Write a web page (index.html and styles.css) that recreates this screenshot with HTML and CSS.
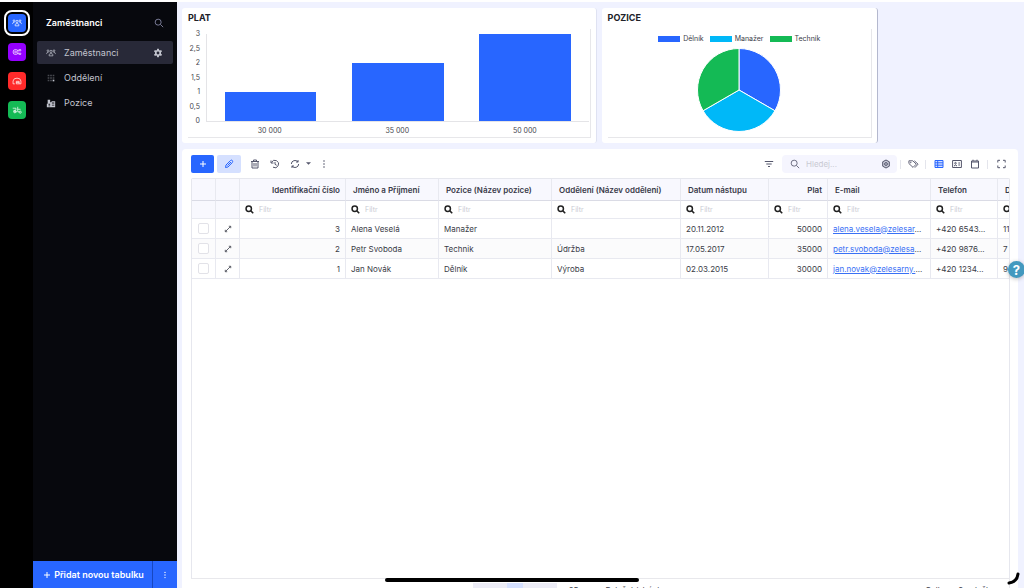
FILE: index.html
```
<!DOCTYPE html>
<html lang="cs">
<head>
<meta charset="utf-8">
<meta name="viewport" content="width=device-width, initial-scale=1">
<title>Zaměstnanci</title>
<link rel="stylesheet" href="styles.css">
</head>
<body>
<svg class="defs" aria-hidden="true">
  <symbol id="search" viewBox="0 0 12 12"><circle cx="5" cy="5" r="3.6"/><path d="M7.8 7.8 11 11"/></symbol>
  <symbol id="people" viewBox="0 0 14 12"><circle cx="7" cy="3.8" r="1.6"/><circle cx="2.8" cy="2.8" r="1.2"/><circle cx="11.200" cy="2.800" r="1.2"/><path d="M4.400 10V8.500Q4.400 6.800 7 6.800T9.600 8.500V10ZM1 7.500V6.300Q1 5 3.500 5.100M13 7.500V6.300Q13 5 10.500 5.100"/></symbol>
  <symbol id="gear" viewBox="0 0 12 12"><path fill-rule="evenodd" d="M5 1h2l.3 1.500 1 .5 1.500-.6 1 1.700-1.200 1v1.700l1.200 1-1 1.700-1.500-.6-1 .5L7 11H5l-.3-1.600-1-.5-1.500.6-1-1.700 1.200-1V5.100l-1.200-1 1-1.700 1.500.6 1-.5ZM6 4.300a1.700 1.700 0 1 0 0 3.400 1.700 1.700 0 0 0 0-3.400Z"/></symbol>
  <symbol id="expand" viewBox="0 0 10 10"><path d="M2 8 8 2M6 1.600h2.400V4M4 8.400H1.600V6"/></symbol>
</svg>
<div class="app">
  <nav class="rail" aria-label="Aplikace">
    <button class="app-btn blue active" aria-label="Zaměstnanci"><svg class="ico line"><use href="#people"/></svg></button>
    <button class="app-btn purple" aria-label="Procesy"><svg class="ico line" viewBox="0 0 14 12"><circle cx="5" cy="6" r="3.500"/><circle cx="5" cy="6" r="1.300"/><path d="M8 3.500h2M8 8.500h2"/><circle cx="11.200" cy="3.500" r="1.200"/><circle cx="11.200" cy="8.500" r="1.200"/></svg></button>
    <button class="app-btn red" aria-label="Sklad"><svg class="ico line" viewBox="0 0 14 12"><path d="M1.500 10V6Q2 2 7 2t5.500 4v4H10M1.500 10H4M6 10V6.500h4V10ZM6 8.200h4"/></svg></button>
    <button class="app-btn green" aria-label="Stroje"><svg class="ico line" viewBox="0 0 14 12"><path d="M1 3.500h4.500v3H2M8 1.500v7h2M8 5h4M2 8.500h5"/><circle cx="4" cy="8.500" r="1.500"/><circle cx="11.500" cy="9" r="1.500"/></svg></button>
  </nav>
  <aside class="sidebar">
    <header class="side-head"><h1>Zaměstnanci</h1><button aria-label="Hledat"><svg class="ico line"><use href="#search"/></svg></button></header>
    <ul class="menu">
      <li class="current"><a href="#"><svg class="ico line"><use href="#people"/></svg>Zaměstnanci</a><button aria-label="Nastavení"><svg class="ico solid"><use href="#gear"/></svg></button></li>
      <li><a href="#"><svg class="ico solid" viewBox="0 0 12 12"><path opacity=".35" d="M2 2h2v2H2zM5 2h2v2H5zM8 2h2v2H8zM2 5h2v2H2zM5 5h2v2H5zM8 5h2v2H8zM2 8h2v2H2zM5 8h2v2H5z"/><path d="M8 8h2v2H8z"/></svg>Oddělení</a></li>
      <li><a href="#"><svg class="ico solid" viewBox="0 0 12 12"><path fill-rule="evenodd" d="M2 2h3v3h1l1-1h4v7H1V7h1ZM3 7v1h2V7ZM7 5.500v1h3v-1ZM3 9v1h2V9ZM7 8v1h3V8Z"/></svg>Pozice</a></li>
    </ul>
    <footer class="side-foot"><button class="add-table"><svg class="ico line" viewBox="0 0 8 8"><path d="M4 1v6M1 4h6"/></svg>Přidat novou tabulku</button><button class="more" aria-label="Další"><svg class="ico solid" viewBox="0 0 8 8"><circle cx="4" cy="1.400" r=".7"/><circle cx="4" cy="4" r=".7"/><circle cx="4" cy="6.600" r=".7"/></svg></button></footer>
  </aside>
  <main class="main">
    <section class="charts">
      <article class="card">
        <h2>PLAT</h2>
        <div class="plot">
          <div class="bar-chart">
            <div class="scale"><span>3</span><span>2,5</span><span>2</span><span>1,5</span><span>1</span><span>0,5</span><span>0</span></div>
            <div class="bars"><div class="bar one"></div><div class="bar two"></div><div class="bar three"></div></div>
            <div class="cats"><span>30 000</span><span>35 000</span><span>50 000</span></div>
          </div>
        </div>
      </article>
      <article class="card edge">
        <h2>POZICE</h2>
        <div class="plot pie-plot">
          <div class="legend"><span class="l-blue">Dělník</span><span class="l-cyan">Manažer</span><span class="l-green">Technik</span></div>
          <svg class="pie" viewBox="-42 -42 84 84" role="img" aria-label="Pozice"><path fill="#2866ff" d="M0 0V-41.500A41.500 41.500 0 0 1 35.940 20.750Z"/><path fill="#00b8f8" d="M0 0 35.940 20.750A41.500 41.500 0 0 1-35.940 20.750Z"/><path fill="#14ba55" d="M0 0-35.940 20.750A41.500 41.500 0 0 1 0-41.500Z"/></svg>
        </div>
      </article>
    </section>
    <section class="panel">
      <div class="toolbar">
        <button class="add" aria-label="Přidat"><svg class="ico line" viewBox="0 0 8 8"><path d="M4 1v6M1 4h6"/></svg></button>
        <button class="edit" aria-label="Upravit"><svg class="ico line" viewBox="0 0 10 10"><path d="m1.500 8.500.5-2.500L6.500 1.500q1-.8 1.800 0t0 2L4 8ZM3.500 6.500l3-3M5.500 2.500l2 2"/></svg></button>
        <div class="actions">
          <button aria-label="Smazat"><svg class="ico line" viewBox="0 0 10 10"><path d="M1 2.500h8M3.500 2.500V1h3v1.500M2 2.500V9h6V2.500M4 4v3.500M6 4v3.500"/></svg></button>
          <button aria-label="Historie"><svg class="ico line" viewBox="0 0 10 10"><path d="M1 1.500v2.500h2.500M1.500 3.500A3.700 3.700 0 1 1 3 8.200M5 3v2.300l1.700 1"/></svg></button>
          <button class="refresh" aria-label="Obnovit"><svg class="ico line" viewBox="0 0 10 10"><path d="M1.300 5A3.700 3.700 0 0 1 8 3V1M8.300 3H6M8.700 5A3.700 3.700 0 0 1 2 7V9M1.700 7H4"/></svg><svg class="caret solid" viewBox="0 0 6 4"><path d="M0 0h6L3 3Z"/></svg></button>
          <button aria-label="Více"><svg class="ico solid" viewBox="0 0 10 10"><circle cx="5" cy="2" r=".8"/><circle cx="5" cy="5" r=".8"/><circle cx="5" cy="8" r=".8"/></svg></button>
        </div>
        <button class="filter" aria-label="Filtr"><svg class="ico line" viewBox="0 0 10 10"><path d="M.8 2.500h8.400M2.300 5h5.400M4 7.500h2"/></svg></button>
        <label class="search"><svg class="ico line"><use href="#search"/></svg><input type="text" placeholder="Hledej..." aria-label="Hledej"><svg class="ico line" viewBox="0 0 10 10"><path fill="#c9cad8" d="M5 1 8.300 2.800v4.400L5 9 1.700 7.200V2.800Z"/><circle cx="5" cy="5" r="1.400"/></svg></label>
        <span class="sep"></span>
        <button aria-label="Štítky"><svg class="ico line" viewBox="0 0 12 10"><path d="M1 1.500h4.200L9 5.200 5.500 8.700 1 4.500ZM7 1.500l4 3.700L7.500 9"/><circle cx="3" cy="3.400" r=".4"/></svg></button>
        <span class="sep"></span>
        <div class="views">
          <button class="on" aria-label="Tabulka"><svg class="ico line" viewBox="0 0 10 10"><path fill="#d5e0ff" d="M1 1.500h8v7H1Z"/><path d="M3.700 1.500v7M1 3.800h8M1 6.200h8"/></svg></button>
          <button aria-label="Karty"><svg class="ico line" viewBox="0 0 10 10"><path d="M.6 1.500h8.800v7H.6ZM2 7q1.500-2 3 0M6.300 4H8M6.300 6H8"/><circle cx="3.500" cy="4.200" r=".8"/></svg></button>
          <button aria-label="Kalendář"><svg class="ico line" viewBox="0 0 10 10"><path d="M1.500 2h7v7h-7ZM1.500 3h7M3 .7V2M7 .7V2"/></svg></button>
        </div>
        <span class="sep"></span>
        <button aria-label="Celá obrazovka"><svg class="ico line" viewBox="0 0 10 10"><path d="M1.300 3.500V1.300h2.200M6.500 1.300h2.200v2.200M8.700 6.500v2.200H6.500M3.500 8.700H1.300V6.500"/></svg></button>
      </div>
      <div class="grid">
        <table>
          <colgroup><col class="c-check"><col class="c-open"><col class="c-id"><col class="c-name"><col class="c-pos"><col class="c-dep"><col class="c-date"><col class="c-pay"><col class="c-mail"><col class="c-tel"><col class="c-rest"></colgroup>
          <thead>
            <tr><th></th><th></th><th class="num">Identifikační číslo</th><th>Jméno a Příjmení</th><th>Pozice (Název pozice)</th><th>Oddělení (Název oddělení)</th><th>Datum nástupu</th><th class="num">Plat</th><th>E-mail</th><th>Telefon</th><th>D</th></tr>
            <tr class="filters"><td></td><td></td>
              <td><label><svg class="ico line"><use href="#search"/></svg><input placeholder="Filtr" aria-label="Filtr Identifikační číslo"></label></td>
              <td><label><svg class="ico line"><use href="#search"/></svg><input placeholder="Filtr" aria-label="Filtr Jméno"></label></td>
              <td><label><svg class="ico line"><use href="#search"/></svg><input placeholder="Filtr" aria-label="Filtr Pozice"></label></td>
              <td><label><svg class="ico line"><use href="#search"/></svg><input placeholder="Filtr" aria-label="Filtr Oddělení"></label></td>
              <td><label><svg class="ico line"><use href="#search"/></svg><input placeholder="Filtr" aria-label="Filtr Datum nástupu"></label></td>
              <td><label><svg class="ico line"><use href="#search"/></svg><input placeholder="Filtr" aria-label="Filtr Plat"></label></td>
              <td><label><svg class="ico line"><use href="#search"/></svg><input placeholder="Filtr" aria-label="Filtr E-mail"></label></td>
              <td><label><svg class="ico line"><use href="#search"/></svg><input placeholder="Filtr" aria-label="Filtr Telefon"></label></td>
              <td><label><svg class="ico line"><use href="#search"/></svg><input aria-label="Filtr D"></label></td>
            </tr>
          </thead>
          <tbody>
            <tr><td class="tool"><input type="checkbox" aria-label="Vybrat Alena Veselá"></td><td class="tool"><button aria-label="Otevřít"><svg class="ico line"><use href="#expand"/></svg></button></td><td class="num">3</td><td>Alena Veselá</td><td>Manažer</td><td></td><td>20.11.2012</td><td class="num">50000</td><td><a href="#">alena.vesela@zelesar</a>...</td><td>+420 6543...</td><td>11</td></tr>
            <tr><td class="tool"><input type="checkbox" aria-label="Vybrat Petr Svoboda"></td><td class="tool"><button aria-label="Otevřít"><svg class="ico line"><use href="#expand"/></svg></button></td><td class="num">2</td><td>Petr Svoboda</td><td>Technik</td><td>Údržba</td><td>17.05.2017</td><td class="num">35000</td><td><a href="#">petr.svoboda@zelesa</a>...</td><td>+420 9876...</td><td>7</td></tr>
            <tr><td class="tool"><input type="checkbox" aria-label="Vybrat Jan Novák"></td><td class="tool"><button aria-label="Otevřít"><svg class="ico line"><use href="#expand"/></svg></button></td><td class="num">1</td><td>Jan Novák</td><td>Dělník</td><td>Výroba</td><td>02.03.2015</td><td class="num">30000</td><td><a href="#">jan.novak@zelesarny.</a>...</td><td>+420 1234...</td><td>9</td></tr>
          </tbody>
        </table>
      </div>
      <footer class="pager"><div class="pages"><span></span></div><span class="size">25</span><span class="per">Položek/stránku</span><span class="total">Celkem: 3 položky</span></footer>
    </section>
  </main>
  <button class="help" aria-label="Nápověda">?</button>
  <div class="home-bar"></div>
  <svg class="corner" viewBox="0 0 14 14" aria-hidden="true"><path d="M2 11Q10 10 11 2"/></svg>
</div>
</body>
</html>
```
FILE: styles.css
```
* { box-sizing: border-box; }
body { margin: 0; font: 8px/12px Inter, "Liberation Sans", sans-serif; color: #3a3c47; background: #fff; }
button { border: 0; padding: 0; background: none; color: inherit; font: inherit; display: flex; align-items: center; justify-content: center; }
input { font: inherit; border: 0; padding: 0; background: none; min-width: 0; outline: 0; }
a { color: inherit; text-decoration: none; }
h1, h2, ul { margin: 0; padding: 0; }
ul { list-style: none; }
.defs { position: absolute; width: 0; height: 0; }
.ico { width: 10px; height: 10px; flex: none; }
.line { fill: none; stroke: currentColor; stroke-width: 1; }
.solid { fill: currentColor; }

.app { position: relative; display: flex; height: 100vh; padding-top: 2px; overflow: hidden; }

.rail { width: 33px; flex: none; background: #000; display: flex; flex-direction: column; align-items: center; gap: 11px; padding-top: 12px; }
.app-btn { width: 18px; height: 18px; border-radius: 4px; color: #fff; }
.active { outline: 2px solid #fff; outline-offset: 2px; }
.blue { background: #2866ff; }
.purple { background: #9500ff; }
.red { background: #ff2a2a; }
.green { background: #14ba55; }

.sidebar { width: 144px; flex: none; background: #07080d; color: #c3c5cf; display: flex; flex-direction: column; }
.side-head { display: flex; align-items: center; justify-content: space-between; padding: 14px 13px 11px; color: #8e90b0; }
.side-head h1 { font-size: 9px; line-height: 14px; font-weight: 600; color: #fff; }
.menu { flex: 1; padding: 0 4px; display: flex; flex-direction: column; gap: 2px; }
.menu li { height: 23px; padding: 0 10px 0 9px; display: flex; align-items: center; justify-content: space-between; border-radius: 2px; font-size: 9px; }
.menu a { display: flex; align-items: center; gap: 8px; }
.menu li.current { background: #282938; }
.side-foot { display: flex; height: 27px; background: #2866ff; color: #fff; }
.side-foot .ico { width: 8px; height: 8px; }
.add-table { flex: 1; gap: 3px; padding-left: 2px; font-size: 9px; font-weight: 600; }
.more { width: 25px; border-left: 1px solid #1747c0; }

.main { flex: 1; min-width: 0; background: #f0f2ff; padding: 6px 6px 0 5px; display: flex; flex-direction: column; gap: 7px; }
.charts { display: grid; grid-template-columns: 3fr 2fr; gap: 5px; height: 134px; padding-right: 140px; }
.card { background: #fff; border-radius: 3px; padding: 4px 5px 5px 6px; display: flex; flex-direction: column; gap: 5px; min-width: 0; border-right: 1px solid #dfe2f2; }
.edge { border-right-color: #b4b8ce; }
.card h2 { font-size: 9px; line-height: 12px; font-weight: 700; color: #202128; }
.plot { flex: 1; border: solid #e7e7ea; border-width: 0 1px 1px 0; min-height: 0; }
.bar-chart { display: grid; grid-template-columns: 12px 1fr; column-gap: 6px; font-size: 7px; line-height: 10px; color: #45464e; padding-right: 1px; }
.scale { display: flex; flex-direction: column; justify-content: space-between; text-align: right; height: 97px; margin-bottom: -1px; }
.bars { height: 88px; margin-top: 5px; border: solid #e4e4e7; border-width: 0 0 1px 1px; display: grid; grid-template-columns: repeat(3, 1fr); align-items: end; justify-items: center; }
.bar { width: 72%; background: #2866ff; }
.one { height: 33.3%; }
.two { height: 66.6%; }
.three { height: 100%; }
.cats { grid-column: 2; display: grid; grid-template-columns: repeat(3, 1fr); text-align: center; line-height: 12px; }
.pie-plot { display: flex; flex-direction: column; align-items: center; gap: 3px; padding-top: 4px; }
.legend { display: flex; gap: 6px; font-size: 7px; line-height: 12px; }
.legend span { display: flex; align-items: center; gap: 3px; }
.legend span::before { content: ""; width: 22px; height: 6px; background: var(--key); }
.l-blue { --key: #2866ff; }
.l-cyan { --key: #00b8f8; }
.l-green { --key: #14ba55; }
.pie { width: 84px; height: 84px; flex: none; stroke: #fff; stroke-width: 1; }

.panel { flex: 1; min-height: 0; background: #fff; border-radius: 4px 4px 0 0; padding: 6px 8px 0 9px; display: flex; flex-direction: column; }
.toolbar { display: flex; align-items: center; height: 18px; color: #55576c; margin-bottom: 5px; padding-right: 3px; }
.toolbar .add, .toolbar .edit { height: 18px; border-radius: 2px; }
.add { width: 23px; background: #2866ff; color: #fff; margin-right: 3px; }
.add .ico { width: 8px; height: 8px; }
.edit { width: 24px; background: #d5e0ff; color: #2866ff; }
.actions { display: flex; gap: 10px; margin-left: 9px; }
.refresh { gap: 6px; }
.refresh + button { margin-left: -2px; }
.caret { width: 5px; height: 4px; }
.filter { margin-left: auto; }
.search { width: 115px; height: 18px; margin-left: 8px; padding: 0 6px 0 8px; border-radius: 4px; background: #f5f5fe; display: flex; align-items: center; gap: 6px; }
.search input { flex: 1; }
::placeholder { color: #c9cad3; opacity: 1; }
.sep { width: 1px; height: 9px; background: #e4e5ec; margin: 0 8px 0 3px; }
.search + .sep { margin-right: 7px; }
.sep + button .ico { width: 11px; }
.views { display: flex; gap: 8px; }
.views + .sep { margin: 0 8px 0 7px; }
.toolbar .sep:nth-of-type(2) { margin-left: 6px; }
.on { color: #2866ff; }

.grid { flex: 1; min-height: 0; border: 1px solid #e6e7ee; border-bottom: 0; overflow: hidden; border-radius: 2px 2px 0 0; }
table { table-layout: fixed; border-collapse: separate; border-spacing: 0; width: 111%; min-width: 908px; font-size: 8px; }
.c-check { width: 24px; }
.c-open { width: 24px; }
.c-id { width: 106px; }
.c-name { width: 93px; }
.c-pos { width: 113px; }
.c-dep { width: 129px; }
.c-date { width: 88px; }
.c-pay { width: 59px; }
.c-mail { width: 103px; }
.c-tel { width: 67px; }
th, td { border: solid #e8e9f0; border-width: 0 1px 1px 0; padding: 0 5px; text-align: left; white-space: nowrap; overflow: hidden; }
th { height: 22px; padding: 0 5px 0 7px; background: #f8f8fe; font-weight: 600; border-bottom-color: #dadbe5; color: #383a49; }
.filters td { height: 18px; }
.filters td:nth-child(-n+2) { background: #f8f8fe; }
.filters label { display: flex; align-items: center; gap: 5px; }
.filters .ico { width: 9px; height: 9px; color: #222; stroke-width: 2; }
.filters input { flex: 1; width: 20px; font-size: 7px; }
tbody td { height: 20px; }
tbody tr:nth-child(2) { background: #fbfbfc; }
.num { text-align: right; }
.tool { padding: 0; text-align: center; }
.tool button { width: 100%; }
.tool .ico { width: 8px; height: 8px; }
.tool input { appearance: none; display: block; width: 11px; height: 11px; margin: 0 auto; background: #fff; border: 1px solid #e2e2e8; border-radius: 2px; }
td a { color: #3970f5; text-decoration: underline; }

.pager { height: 10px; flex: none; border-top: 1px solid #e8e8ec; border-right: 1px solid #e8e8ec; display: flex; align-items: flex-start; overflow: hidden; padding: 4px 14px 0 34.4%; }
.pages { width: 84px; height: 12px; flex: none; background: #ececf6; display: flex; justify-content: center; }
.pages span { width: 16px; height: 12px; background: #d5e0ff; }
.size, .per, .total { margin-top: 1px; }
.size { margin-left: 12px; margin-right: 27px; }
.total { margin-left: auto; }

.help { position: absolute; right: -1px; top: 261px; width: 17px; height: 17px; border-radius: 50%; background: #4399bf; color: #fff; font-size: 13px; font-weight: 700; box-shadow: 0 1px 4px #0004; }
.home-bar { position: absolute; left: 50%; bottom: 6px; width: 254px; height: 4px; margin-left: -127px; background: #000; border-radius: 2px; }
.corner { position: absolute; right: 3px; bottom: 2px; width: 14px; height: 14px; fill: none; stroke: #000; stroke-width: 3; stroke-linecap: round; }
```
